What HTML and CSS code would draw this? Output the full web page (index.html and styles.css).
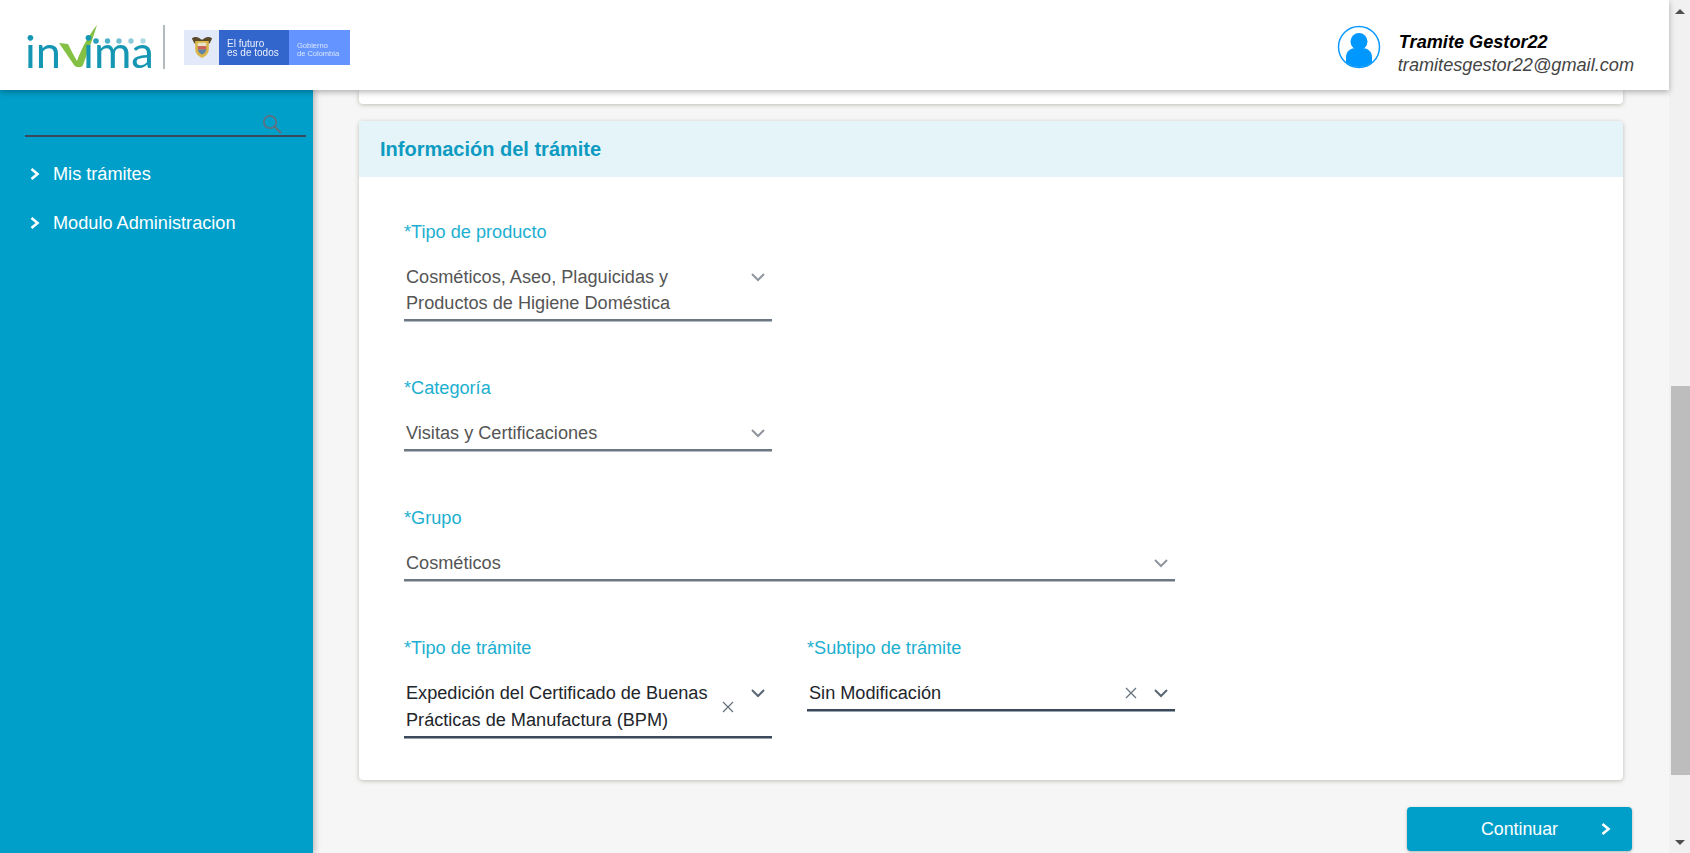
FILE: index.html
```html
<!DOCTYPE html>
<html lang="es">
<head>
<meta charset="utf-8">
<title>Información del trámite</title>
<link rel="stylesheet" href="styles.css">
</head>
<body>
<div class="app">
  <header class="topbar">
    <div class="brand">
      <svg class="logo" width="130" height="66" viewBox="26 14 130 66" aria-label="invima">
        <text class="logo-text" x="25" y="68" textLength="36" lengthAdjust="spacingAndGlyphs">in</text>
        <path class="logo-check" d="M59 43 L68 44 C71 50 74 56 77 61 C82 47 89 35 97 25 C93 38 88 52 83 65 C82 68 76 68 74 65 Z"/>
        <text class="logo-text" x="83" y="68" textLength="71" lengthAdjust="spacingAndGlyphs">ima</text>
        <circle class="logo-d1" cx="96" cy="41" r="2.800"/>
        <circle class="logo-d2" cx="107.500" cy="41" r="2.700"/>
        <circle class="logo-d3" cx="119" cy="41" r="2.700"/>
        <circle class="logo-d4" cx="131" cy="41" r="2.700"/>
        <circle class="logo-d5" cx="143" cy="41" r="2.700"/>
      </svg>
      <span class="brand-rule"></span>
      <div class="gov">
        <div class="gov-crest">
          <svg width="22" height="26" viewBox="0 0 26 28">
            <path d="M1 4 C5 1 9 2 12 5 L14 5 C17 2 21 1 25 4 L22 10 L4 10 Z" fill="#5b4a2a"/>
            <path d="M5 7 H21 V17 C21 22 17 25 13 27 C9 25 5 22 5 17 Z" fill="#d9b64a"/>
            <rect x="8" y="9" width="10" height="4" fill="#e9e3c8"/>
            <rect x="8" y="13" width="10" height="4" fill="#c9605c"/>
            <path d="M8 17 H18 C18 20 15 22 13 23 C11 22 8 20 8 17 Z" fill="#5f83a8"/>
          </svg>
        </div>
        <div class="gov-main">El futuro<br>es de todos</div>
        <div class="gov-side">Gobierno<br>de Colombia</div>
      </div>
    </div>
    <div class="user">
      <svg class="avatar" width="44" height="44" viewBox="0 0 44 44">
        <defs><clipPath id="avatar-clip"><circle cx="22" cy="22" r="20"/></clipPath></defs>
        <circle cx="22" cy="22" r="20.500" fill="#fff" stroke="#0d99ff" stroke-width="1.500"/>
        <g clip-path="url(#avatar-clip)" fill="#0097ff">
          <circle cx="22" cy="16.500" r="8.500"/>
          <path d="M9 44 V32 C9 26 14 23 19 23 H25 C30 23 35 26 35 32 V44 Z"/>
        </g>
      </svg>
      <div class="user-text">
        <div class="user-name">Tramite Gestor22</div>
        <div class="user-mail">tramitesgestor22@gmail.com</div>
      </div>
    </div>
  </header>

  <div class="body-row">
    <aside class="sidebar">
      <div class="search">
        <svg width="20" height="20" viewBox="0 0 20 20" fill="none" stroke="#5f7080">
          <circle cx="8" cy="8" r="6.200" stroke-width="1.800"/>
          <path d="M12.500 12.500 L19 19" stroke-width="2.200"/>
        </svg>
      </div>
      <nav class="menu">
        <a class="menu-item">
          <svg class="chev-white" width="10" height="14" viewBox="0 0 10 14"><path d="M1.500 2 L7.500 7 L1.500 12"/></svg>
          <span>Mis trámites</span>
        </a>
        <a class="menu-item">
          <svg class="chev-white" width="10" height="14" viewBox="0 0 10 14"><path d="M1.500 2 L7.500 7 L1.500 12"/></svg>
          <span>Modulo Administracion</span>
        </a>
      </nav>
    </aside>

    <main class="content">
      <div class="card card-stub"></div>
      <section class="card">
        <h2 class="card-title">Información del trámite</h2>
        <form class="form-grid">
          <div class="field">
            <label class="field-label">*Tipo de producto</label>
            <div class="select is-muted">
              <span class="select-value">Cosméticos, Aseo, Plaguicidas y Productos de Higiene Doméstica</span>
              <svg class="chev-grey" width="16" height="10" viewBox="0 0 16 10"><path d="M2 2 L8 8 L14 2"/></svg>
            </div>
          </div>
          <div class="field field-break">
            <label class="field-label">*Categoría</label>
            <div class="select is-muted">
              <span class="select-value">Visitas y Certificaciones</span>
              <svg class="chev-grey" width="16" height="10" viewBox="0 0 16 10"><path d="M2 2 L8 8 L14 2"/></svg>
            </div>
          </div>
          <div class="field field-wide">
            <label class="field-label">*Grupo</label>
            <div class="select is-muted">
              <span class="select-value">Cosméticos</span>
              <svg class="chev-grey" width="16" height="10" viewBox="0 0 16 10"><path d="M2 2 L8 8 L14 2"/></svg>
            </div>
          </div>
          <div class="field">
            <label class="field-label">*Tipo de trámite</label>
            <div class="select">
              <span class="select-value">Expedición del Certificado de Buenas Prácticas de Manufactura (BPM)</span>
              <svg class="clear" width="12" height="12" viewBox="0 0 12 12"><path d="M1 1 L11 11 M11 1 L1 11"/></svg>
              <svg class="chev-dark" width="16" height="10" viewBox="0 0 16 10"><path d="M2 2 L8 8 L14 2"/></svg>
            </div>
          </div>
          <div class="field">
            <label class="field-label">*Subtipo de trámite</label>
            <div class="select">
              <span class="select-value">Sin Modificación</span>
              <svg class="clear" width="12" height="12" viewBox="0 0 12 12"><path d="M1 1 L11 11 M11 1 L1 11"/></svg>
              <svg class="chev-dark" width="16" height="10" viewBox="0 0 16 10"><path d="M2 2 L8 8 L14 2"/></svg>
            </div>
          </div>
        </form>
      </section>
      <div class="actions">
        <button class="btn-next" type="button">
          <span>Continuar</span>
          <svg class="chev-white btn-chev" width="10" height="14" viewBox="0 0 10 14"><path d="M1.500 2 L7.500 7 L1.500 12"/></svg>
        </button>
      </div>
    </main>
  </div>
</div>

<div class="scrollbar">
  <span class="arrow-up"></span>
  <div class="scroll-track"><div class="scroll-thumb"></div></div>
  <span class="arrow-down"></span>
</div>
</body>
</html>
```

FILE: styles.css
```css
* { box-sizing: border-box; }

html, body {
  margin: 0;
  height: 853px;
  overflow: hidden;
}

body {
  display: flex;
  font-family: "Liberation Sans", Arial, sans-serif;
  background: #f6f6f6;
}

.app {
  flex: 1;
  min-width: 0;
  display: flex;
  flex-direction: column;
  height: 853px;
}

/* Top bar */
.topbar {
  height: 90px;
  flex: none;
  display: flex;
  align-items: center;
  justify-content: space-between;
  background: #fff;
  box-shadow: 0 2px 6px rgba(0, 0, 0, .3);
  position: relative;
  z-index: 2;
  padding: 4px 35px 0 26px;
}

.brand {
  display: flex;
  align-items: center;
}

.logo {
  display: block;
  filter: blur(.4px);
}

.logo-text {
  font-family: Lato, sans-serif;
  font-weight: 400;
  font-size: 44px;
  fill: #1597b3;
}

.logo-check { fill: #84c044; }
.logo-d1 { fill: #27a0bc; }
.logo-d2 { fill: #4cb0c8; }
.logo-d3 { fill: #70bfd2; }
.logo-d4 { fill: #8fcbdb; }
.logo-d5 { fill: #aedae5; }

.brand-rule {
  width: 2px;
  height: 44px;
  margin: 0 19px 0 7px;
  background: #b4b9bb;
}

.gov {
  display: flex;
  width: 166px;
  height: 35px;
  filter: blur(.35px);
}

.gov-crest {
  width: 35px;
  background: #e2eafa;
  display: flex;
  align-items: center;
  justify-content: center;
}

.gov-main {
  width: 70px;
  padding: 9px 0 0 8px;
  background: #3366cc;
  color: #e8eefb;
  font-size: 10px;
  line-height: 9px;
}

.gov-side {
  flex: 1;
  padding: 12px 0 0 8px;
  background: #6394ff;
  color: #dbe6ff;
  font-size: 7.500px;
  line-height: 8px;
}

.user {
  display: flex;
  align-items: center;
  gap: 17px;
}

.avatar { display: block; }

.user-text {
  font-style: italic;
  padding-top: 11px;
}

.user-name {
  font-size: 18.150px;
  font-weight: 700;
  line-height: 24px;
  color: #000;
  padding-left: 1px;
}

.user-mail {
  font-size: 18.150px;
  line-height: 22px;
  color: #444;
}

/* Body */
.body-row {
  flex: 1;
  min-height: 0;
  display: flex;
}

.sidebar {
  width: 313px;
  flex: none;
  background: #009fca;
  box-shadow: 2px 0 6px rgba(0, 0, 0, .25);
  position: relative;
  z-index: 1;
  padding: 24px 7px 0 25px;
}

.search {
  height: 23px;
  display: flex;
  justify-content: flex-end;
  padding-right: 24px;
  border-bottom: 2px solid #37495a;
}

.menu {
  display: flex;
  flex-direction: column;
  gap: 21px;
  padding: 23px 0 0 5px;
}

.menu-item {
  display: flex;
  align-items: center;
  gap: 13px;
  height: 28px;
  color: #fff;
  font-size: 18.150px;
}

.chev-white {
  fill: none;
  stroke: #fff;
  stroke-width: 2.600;
}

.chev-grey, .chev-dark, .clear {
  flex: none;
  fill: none;
}

.chev-grey {
  stroke: #8f969d;
  stroke-width: 2;
  margin-top: 8px;
}

.chev-dark {
  stroke: #596775;
  stroke-width: 2;
  margin-top: 8px;
}

.clear {
  stroke: #68747f;
  stroke-width: 1.300;
  align-self: center;
  margin-right: 16px;
}

/* Content */
.content {
  flex: 1;
  min-width: 0;
  overflow: hidden;
  padding: 0 46px;
}

.card {
  background: #fff;
  border-radius: 4px;
  box-shadow: 0 1px 4px rgba(110, 105, 80, .4);
}

.card-stub {
  height: 14px;
  margin-bottom: 17px;
  border-radius: 0 0 4px 4px;
}

.card-title {
  margin: 0;
  height: 56px;
  display: flex;
  align-items: center;
  padding-left: 21px;
  background: #e5f4f9;
  border-radius: 4px 4px 0 0;
  color: #0e9bc1;
  font-size: 20px;
  font-weight: 700;
}

.form-grid {
  display: grid;
  grid-template-columns: 368px 368px;
  column-gap: 35px;
  row-gap: 57px;
  align-items: start;
  padding: 44.500px 45px 42.500px;
}

.field-break { grid-column: 1; }
.field-wide { grid-column: 1 / span 2; }

.field-label {
  display: block;
  height: 20px;
  line-height: 20px;
  margin-bottom: 21.500px;
  color: #1cafd0;
  font-size: 18.150px;
}

.select {
  display: flex;
  align-items: flex-start;
  padding: .500px 6px 2.500px 2px;
  border-bottom: 2px solid #3a4a5a;
  box-shadow: 0 1px 0 #9aa3ac;
  color: #22262b;
  font-size: 18.150px;
  line-height: 26.500px;
}

.select.is-muted {
  border-bottom-color: #6b7883;
  box-shadow: 0 1px 0 #b4bac0;
  color: #555;
}

.select-value {
  flex: 1;
  min-width: 0;
}

/* Actions */
.actions {
  display: flex;
  justify-content: flex-end;
  margin: 27px -9px 0 0;
}

.btn-next {
  position: relative;
  width: 225px;
  height: 44px;
  border: 0;
  border-radius: 4px;
  background: #009fca;
  box-shadow: 0 1px 3px rgba(0, 0, 0, .3);
  color: #fff;
  font: 17.800px "Liberation Sans", Arial, sans-serif;
}

.btn-chev {
  position: absolute;
  right: 21px;
  top: 15px;
}

/* Window scrollbar */
.scrollbar {
  width: 21px;
  flex: none;
  height: 853px;
  display: flex;
  flex-direction: column;
  align-items: center;
  background: #f1f1f1;
}

.scroll-track {
  flex: 1;
  width: 100%;
  display: flex;
  flex-direction: column;
  justify-content: flex-start;
  padding: 372px 0 0 2px;
}

.scroll-thumb {
  height: 389px;
  background: #bdbdbd;
}

.arrow-up, .arrow-down {
  width: 0;
  height: 0;
  flex: none;
  border-left: 5px solid transparent;
  border-right: 5px solid transparent;
}

.arrow-up {
  margin-top: 9px;
  border-bottom: 5px solid #505050;
}

.arrow-down {
  margin-bottom: 8px;
  border-top: 5px solid #505050;
}
```
